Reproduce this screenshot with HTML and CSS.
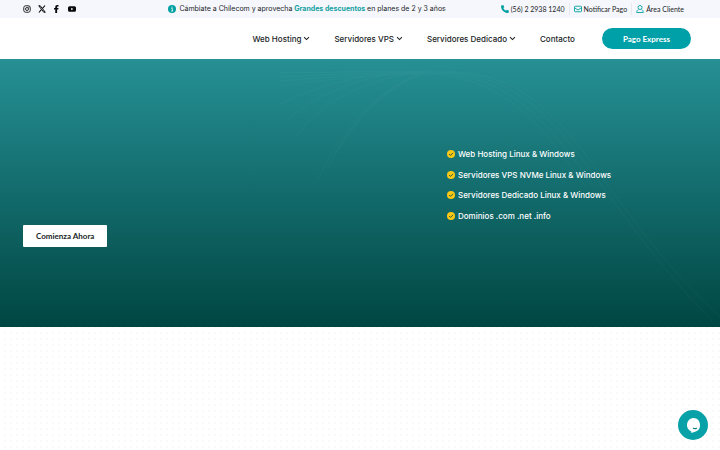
FILE: index.html
```html
<!DOCTYPE html>
<html lang="es">
<head>
<meta charset="utf-8">
<meta name="viewport" content="width=device-width, initial-scale=1">
<title>Chilecom</title>
<link rel="stylesheet" href="styles.css">
</head>
<body>
<div class="topbar">
  <nav class="social" aria-label="Redes sociales">
    <a href="#" aria-label="Instagram"><svg viewBox="0 0 16 16" fill="none" stroke="currentColor" stroke-width="1.7"><rect x="1.5" y="1.5" width="13" height="13" rx="4"/><circle cx="8" cy="8" r="3"/><circle cx="11.8" cy="4.2" r=".4"/></svg></a>
    <a href="#" aria-label="X"><svg viewBox="0 0 16 16" fill="none" stroke="currentColor"><path stroke-width="2" d="M1.500 1.500h3l10 13h-3z"/><path stroke-width="2.200" d="M14 1 9 6.800M6.800 9.400 1.800 15"/></svg></a>
    <a href="#" aria-label="Facebook"><svg viewBox="0 0 16 16" fill="currentColor"><path d="M4.500 16V9H2V6h2.500V4c0-2.600 1.500-4 4-4 1.200 0 2.500.2 2.500.2v2.600H9.700c-1.200 0-1.500.7-1.500 1.500V6H11l-.5 3H8.200v7z"/></svg></a>
    <a href="#" aria-label="YouTube"><svg viewBox="0 0 16 16" fill="currentColor"><path fill-rule="evenodd" d="M3 2.500h10a3 3 0 0 1 3 3v5a3 3 0 0 1-3 3H3a3 3 0 0 1-3-3v-5a3 3 0 0 1 3-3zM6.400 5.500v5L10.800 8z"/></svg></a>
  </nav>
  <p class="promo">
    <svg viewBox="0 0 16 16"><circle cx="8" cy="8" r="8" fill="#00a0a3"/><path d="M6.500 7h2.200v5M6.300 12h3.800" stroke="#fff" stroke-width="1.600" fill="none"/><circle cx="8" cy="4.200" r="1.200" fill="#fff"/></svg>
    <span>Cámbiate a Chilecom y aprovecha <strong>Grandes descuentos</strong> en planes de 2 y 3 años</span>
  </p>
  <ul class="contact">
    <li><a href="#"><svg viewBox="0 0 16 16" fill="currentColor"><path d="M1 .8 4.600 0 6.600 4.400 4.600 6.200c1 2.200 2.800 4 5.200 5.200l1.800-2L16 11.400l-.8 3.800c-.1.500-.4.800-1 .8C6.500 16 0 9.500 0 1.800c0-.5.400-.9 1-1z"/></svg>(56) 2 2938 1240</a></li>
    <li><a href="#"><svg viewBox="0 0 16 16" fill="none" stroke="currentColor" stroke-width="1.800"><rect x="1" y="2.500" width="14" height="11" rx="1.500"/><path d="m1 5.500 7 4.500 7-4.500"/></svg>Notificar Pago</a></li>
    <li><a href="#"><svg viewBox="0 0 16 16" fill="none" stroke="currentColor" stroke-width="1.800"><circle cx="8" cy="5" r="4"/><path d="M5 9.500c-2.500.6-3.500 2.200-3.500 5.500h13c0-3.300-1-4.900-3.500-5.500"/></svg>Área Cliente</a></li>
  </ul>
</div>
<header class="header">
  <nav class="menu" aria-label="Principal">
    <a href="#">Web Hosting<svg viewBox="0 0 10 10"><path d="m1.500 3 3.500 3.500L8.500 3"/></svg></a>
    <a href="#">Servidores VPS<svg viewBox="0 0 10 10"><path d="m1.500 3 3.500 3.500L8.500 3"/></svg></a>
    <a href="#">Servidores Dedicado<svg viewBox="0 0 10 10"><path d="m1.500 3 3.500 3.500L8.500 3"/></svg></a>
    <a href="#">Contacto</a>
  </nav>
  <a class="express" href="#">Pago Express</a>
</header>
<main>
  <section class="hero">
    <svg class="waves" viewBox="0 0 440 268" fill="none" stroke="#a8e0df" aria-hidden="true">
      <path d="M0 14Q90 12 160 12C245 12 280 60 325 122S390 210 440 258"/>
      <path d="M0 18Q90 13 157 13C240 14 274 62 320 124S385 213 432 262"/>
      <path d="M0 22Q90 14 154 14C234 17 268 65 314 128"/>
      <path d="M0 27Q80 15 151 15C228 20 262 68 308 131"/>
      <path d="M0 45Q65 13 150 12Q95 25 55 95"/>
      <path d="M8 60Q60 15 150 12Q90 30 47 110"/>
      <path d="M15 78Q60 20 150 12Q80 32 38 120"/>
    </svg>
    <a class="start" href="#">Comienza Ahora</a>
    <ul class="features">
      <li><svg viewBox="0 0 16 16"><circle cx="8" cy="8" r="8"/><path d="m4.300 8 2.700 2.800 5-5"/></svg>Web Hosting Linux &amp; Windows</li>
      <li><svg viewBox="0 0 16 16"><circle cx="8" cy="8" r="8"/><path d="m4.300 8 2.700 2.800 5-5"/></svg>Servidores VPS NVMe Linux &amp; Windows</li>
      <li><svg viewBox="0 0 16 16"><circle cx="8" cy="8" r="8"/><path d="m4.300 8 2.700 2.800 5-5"/></svg>Servidores Dedicado Linux &amp; Windows</li>
      <li><svg viewBox="0 0 16 16"><circle cx="8" cy="8" r="8"/><path d="m4.300 8 2.700 2.800 5-5"/></svg>Dominios .com .net .info</li>
    </ul>
  </section>
  <section class="dots"></section>
</main>
<button class="chat" type="button" aria-label="Abrir chat"><svg viewBox="0 0 30 30"><path d="M15.500 8a7 7 0 0 1 1.500 13.700L13.500 23l-.3-1.600A7 7 0 0 1 15.500 8z" fill="#fff"/><path d="M15 18q2 1.400 3.800 0" fill="none" stroke="#087f83" stroke-width="1.200"/></svg></button>
</body>
</html>
```
FILE: styles.css
```css
* { box-sizing: border-box; }
body {
  margin: 0;
  min-height: 100vh;
  display: flex;
  flex-direction: column;
  background: #fff;
  color: #202426;
  font: 500 8px/12px Inter, "Liberation Sans", sans-serif;
}
a { color: inherit; text-decoration: none; }
ul { list-style: none; margin: 0; padding: 0; }
svg { flex: none; }
.topbar {
  display: grid;
  grid-template-columns: 22% 1fr auto;
  align-items: center;
  height: 18px;
  padding: 0 36px 0 23px;
  background: #f6f7fc;
}
.social { display: flex; gap: 7px; color: #08090a; }
.social a { display: flex; width: 8px; }
.social svg { width: 8px; height: 8px; }
.promo {
  display: flex;
  align-items: center;
  gap: 3px;
  margin: 0;
  font-size: 7px;
  font-weight: 400;
}
.promo svg { width: 8px; height: 8px; }
.promo strong { color: #14a0a1; font-weight: 700; }
.contact {
  display: flex;
  justify-content: flex-end;
  font: 400 7px/12px Lato, sans-serif;
}
.contact a { display: flex; align-items: center; gap: 2px; white-space: nowrap; }
.contact li + li { margin-left: 4px; padding-left: 4px; border-left: 1px solid #e7e8ed; }
.contact svg { width: 8px; height: 8px; color: #00a0a3; }
.header {
  display: flex;
  justify-content: flex-end;
  align-items: center;
  gap: 27px;
  height: 41px;
  padding: 0 29px;
}
.menu { display: flex; gap: 24px; }
.menu a { display: flex; align-items: center; gap: 2px; }
.menu svg { width: 7px; height: 7px; fill: none; stroke: #202426; stroke-width: 1.5; }
.express {
  padding: 5px 21px 4px;
  border-radius: 12px;
  background: #00a0a8;
  color: #fff;
  font-family: Lato, sans-serif;
  font-weight: 700;
}
.hero {
  position: relative;
  display: grid;
  grid-template-columns: 424px 1fr;
  height: 268px;
  padding: 89px 23px 0;
  background: linear-gradient(#269095, #004642);
}
.waves {
  position: absolute;
  top: 0;
  right: 0;
  width: 440px;
  height: 268px;
  opacity: .04;
}
.start {
  align-self: start;
  justify-self: start;
  margin-top: 77px;
  padding: 5px 13px;
  border-radius: 1px;
  background: #fff;
  color: #202426;
  font-family: Lato, sans-serif;
  font-weight: 700;
}
.features {
  display: flex;
  flex-direction: column;
  justify-content: space-between;
  height: 74px;
  color: #fff;
}
.features li { display: flex; align-items: center; gap: 3px; }
.features svg { width: 8px; height: 8px; fill: #f9c816; }
.features path { fill: none; stroke: #285b4b; stroke-width: 2; }
.dots {
  height: 123px;
  background: radial-gradient(circle, #f9f9f9 1px, transparent 1px) 2px 3px / 6px 6px;
}
.chat {
  position: fixed;
  right: 12px;
  bottom: 10px;
  width: 30px;
  height: 30px;
  padding: 0;
  border: 0;
  border-radius: 50%;
  background: #08a1a8;
}
.chat svg { display: block; width: 30px; height: 30px; }
```
